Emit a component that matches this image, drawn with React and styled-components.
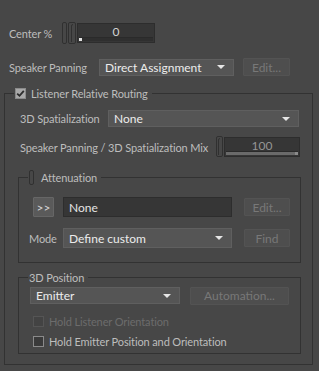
import React from "react";
import styled, { createGlobalStyle } from "styled-components";

const GlobalStyle = createGlobalStyle`
  html, body {
    margin: 0;
    padding: 0;
    background: #474747;
  }
  body {
    font-family: Lato, "Noto Sans", sans-serif;
    font-size: 11px;
    color: #bdbdbd;
  }
`;

const Panel = styled.div`
  width: 319px;
  height: 371px;
  padding-top: 22px;
  box-sizing: border-box;
  overflow: hidden;
`;

const Row = styled.div`
  display: flex;
  align-items: center;
  height: ${({ h }) => h || 20}px;
  margin-top: ${({ mt }) => mt || 0}px;
  padding-left: ${({ pl }) => pl || 0}px;
  gap: ${({ gap }) => gap || 0}px;
`;

const Label = styled.span`
  width: ${({ w }) => (w ? `${w}px` : "auto")};
  flex: none;
  white-space: nowrap;
  font-size: 11px;
  letter-spacing: -0.12px;
  color: ${({ disabled }) => (disabled ? "#6c6c6c" : "#bdbdbd")};
`;

const ValueField = styled.div`
  position: relative;
  width: ${({ w }) => w}px;
  height: 20px;
  box-sizing: border-box;
  background: #363636;
  border: 1px solid #2d2d2d;
  display: flex;
  justify-content: center;
  padding-top: 1px;
  color: ${({ dim }) => (dim ? "#959595" : "#d4d4d4")};
  font-size: 12px;
  line-height: 14px;
  flex: none;
`;

const Track = styled.div`
  position: absolute;
  left: 1px;
  right: 1px;
  bottom: 1px;
  height: 3px;
  background: #2f2f2f;
  border-top: 1px solid #2a2a2a;
`;

const Fill = styled.div`
  height: 100%;
  background: #6a6a6a;
  position: relative;
`;

const Thumb = styled.div`
  position: absolute;
  right: ${({ end }) => (end ? "0" : "auto")};
  left: ${({ end }) => (end ? "auto" : "0")};
  bottom: 0;
  width: 3px;
  height: 3px;
  background: ${({ end }) => (end ? "#8a8a8a" : "#e2e2e2")};
`;

const Select = styled.div`
  width: ${({ w }) => w}px;
  height: ${({ h }) => h || 17}px;
  box-sizing: border-box;
  background: #555555;
  border: 1px solid #5f5f5f;
  display: flex;
  align-items: center;
  justify-content: space-between;
  padding: 0 8px 0 5px;
  color: #ececec;
  font-size: 12px;
  flex: none;
`;

const Caret = styled.span`
  width: 0;
  height: 0;
  border-left: 4px solid transparent;
  border-right: 4px solid transparent;
  border-top: 4px solid #e6e6e6;
`;

const TextField = styled.div`
  width: ${({ w }) => w}px;
  height: 20px;
  box-sizing: border-box;
  background: #363636;
  border: 1px solid #2d2d2d;
  display: flex;
  align-items: center;
  padding-left: 5px;
  color: #e4e4e4;
  font-size: 12px;
  flex: none;
`;

const Button = styled.div`
  width: ${({ w }) => w}px;
  height: ${({ h }) => h || 18}px;
  box-sizing: border-box;
  background: ${({ active }) => (active ? "#5a5a5a" : "#4e4e4e")};
  border: 1px solid ${({ active }) => (active ? "#666" : "#535353")};
  border-radius: 1px;
  display: flex;
  align-items: center;
  justify-content: center;
  color: ${({ active }) => (active ? "#d6d6d6" : "#787878")};
  font-size: 12px;
  flex: none;
`;

const Group = styled.fieldset`
  margin: ${({ m }) => m};
  padding: ${({ p }) => p};
  border: 1px solid #323232;
  min-width: 0;
`;

const Legend = styled.legend`
  display: flex;
  align-items: center;
  gap: ${({ gap }) => gap || 0}px;
  padding: 0 4px 0 1px;
  margin-left: ${({ ml }) => ml || 0}px;
  height: 14px;
  color: #bdbdbd;
  font-size: 11px;
  letter-spacing: -0.12px;
  white-space: nowrap;
`;

const Box = styled.span`
  width: 11px;
  height: 11px;
  box-sizing: border-box;
  flex: none;
  border: 1px solid ${({ disabled }) => (disabled ? "#555" : "#8a8a8a")};
  background: ${({ checked, disabled }) =>
    checked ? "#a9a9a9" : disabled ? "#434343" : "#3a3a3a"};
  display: flex;
  align-items: center;
  justify-content: center;
`;

const Check = ({ checked, disabled }) => (
  <Box checked={checked} disabled={disabled}>
    {checked && (
      <svg width="9" height="9" viewBox="0 0 9 9">
        <path d="M1.2 4.6 L3.5 6.8 L7.8 1.8" stroke="#2c2c2c" strokeWidth="1.8" fill="none" />
      </svg>
    )}
  </Box>
);

const Handle = ({ double }) => (
  <svg width={double ? 15 : 7} height="22" viewBox={double ? "0 0 15 22" : "0 0 7 22"} style={{ flex: "none" }}>
    {double ? (
      <>
        <rect x="0.5" y="0.5" width="4" height="21" rx="1.5" fill="none" stroke="#303030" />
        <rect x="6.5" y="0.5" width="7" height="21" rx="1.5" fill="none" stroke="#303030" />
        <path d="M9.5 20 V4 Q9.5 2.5 11 2.5" stroke="#303030" fill="none" />
      </>
    ) : (
      <>
        <rect x="0.5" y="0.5" width="6" height="20" rx="1.5" fill="none" stroke="#303030" />
        <path d="M2.5 19 V4 Q2.5 2.5 4 2.5" stroke="#303030" fill="none" />
      </>
    )}
  </svg>
);

const Grip = styled.span`
  width: 3px;
  height: 13px;
  border: 1px solid #303030;
  border-radius: 2px;
  flex: none;
`;

export default function App() {
  return (
    <Panel>
      <GlobalStyle />
      <Row pl={9} h={22}>
        <Label w={53}>Center %</Label>
        <Handle double />
        <ValueField w={78}>
          0
          <Track>
            <Thumb />
          </Track>
        </ValueField>
      </Row>

      <Row pl={9} h={18} mt={14}>
        <Label w={90}>Speaker Panning</Label>
        <Select w={135}>
          Direct Assignment
          <Caret />
        </Select>
        <Button w={47} style={{ marginLeft: 9 }}>Edit...</Button>
      </Row>

      <Group m="10px 6px 0 4px" p="0 11px 10px 13px">
        <Legend ml={-4} gap={5}>
          <Check checked />
          Listener Relative Routing
        </Legend>

        <Row pl={2} h={17} mt={10}>
          <Label w={88}>3D Spatialization</Label>
          <Select w={191}>
            None
            <Caret />
          </Select>
        </Row>

        <Row pl={2} h={20} mt={10}>
          <Label w={196}>Speaker Panning / 3D Spatialization Mix</Label>
          <Handle />
          <ValueField w={76} dim style={{ marginLeft: 1 }}>
            100
            <Track>
              <Fill>
                <Thumb end />
              </Fill>
            </Track>
          </ValueField>
        </Row>

        <Group m="13px 0 0 0" p="0 11px 14px 0">
          <Legend ml={9} gap={7}>
            <Grip />
            Attenuation
          </Legend>
          <Row pl={14} h={20} mt={13} gap={9}>
            <Button w={21} h={20} active>
              &gt;&gt;
            </Button>
            <TextField w={169}>None</TextField>
            <Button w={46} style={{ marginLeft: 3 }}>Edit...</Button>
          </Row>
          <Row pl={10} h={20} mt={11}>
            <Label w={34}>Mode</Label>
            <Select w={169} h={20}>
              Define custom
              <Caret />
            </Select>
            <Button w={46} style={{ marginLeft: 12 }}>Find</Button>
          </Row>
        </Group>

        <Group m="7px 0 0 0" p="0 11px 5px 0">
          <Legend ml={9}>3D Position</Legend>
          <Row pl={11} h={17} mt={3}>
            <Select w={150}>
              Emitter
              <Caret />
            </Select>
            <Button w={99} style={{ marginLeft: 10 }}>Automation...</Button>
          </Row>
          <Row pl={14} h={14} mt={10} gap={5}>
            <Check disabled />
            <Label disabled>Hold Listener Orientation</Label>
          </Row>
          <Row pl={14} h={14} mt={6} gap={5}>
            <Check />
            <Label>Hold Emitter Position and Orientation</Label>
          </Row>
        </Group>
      </Group>
    </Panel>
  );
}
